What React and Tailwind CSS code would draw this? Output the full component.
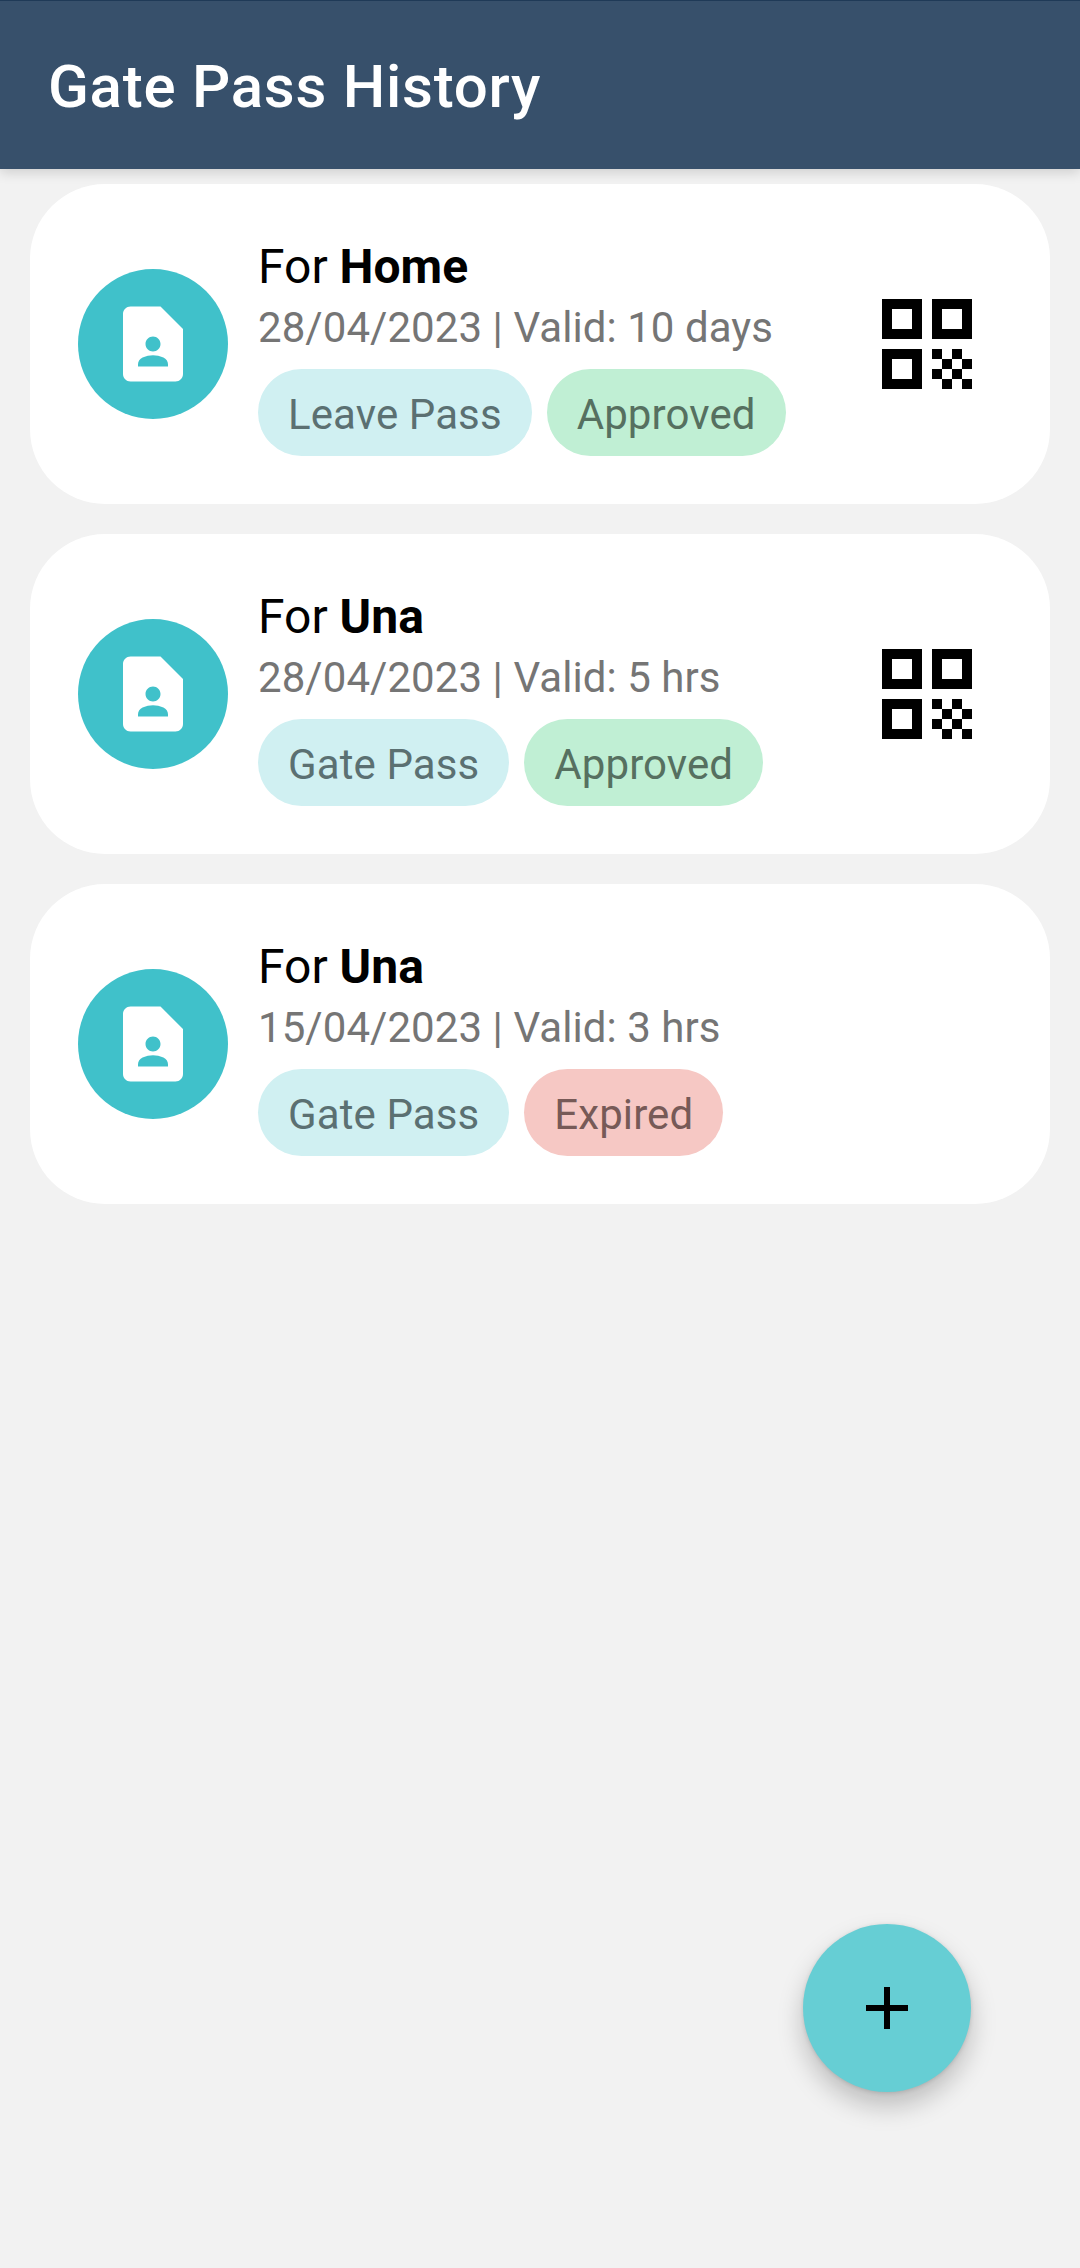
import React from "react";

const passes = [
  { to: "Home", date: "28/04/2023", valid: "10 days", type: "Leave Pass", status: "Approved" },
  { to: "Una", date: "28/04/2023", valid: "5 hrs", type: "Gate Pass", status: "Approved" },
  { to: "Una", date: "15/04/2023", valid: "3 hrs", type: "Gate Pass", status: "Expired" },
];

const statusStyles = {
  Approved: "bg-[#c0efd4] text-[#567060]",
  Expired: "bg-[#f6c8c4] text-[#775a57]",
};

function ContactPageIcon() {
  return (
    <svg viewBox="0 0 24 24" className="size-[90px] fill-white">
      <path d="M14 2H6c-1.1 0-2 .9-2 2v16c0 1.1.9 2 2 2h12c1.1 0 2-.9 2-2V8l-6-6zm-2 8c1.1 0 2 .9 2 2s-.9 2-2 2-2-.9-2-2 .9-2 2-2zm4 8H8v-.57c0-.81.48-1.53 1.22-1.85a6.95 6.95 0 0 1 5.56 0c.74.32 1.22 1.04 1.22 1.85V18z" />
    </svg>
  );
}

function QrIcon() {
  return (
    <svg viewBox="0 0 24 24" className="size-[120px] fill-black" shapeRendering="crispEdges">
      <path d="M3 11h8V3H3v8zm2-6h4v4H5V5zM3 21h8v-8H3v8zm2-6h4v4H5v-4zM13 3v8h8V3h-8zm6 6h-4V5h4v4zM13 13h2v2h-2zM17 13h2v2h-2zM15 15h2v2h-2zM19 15h2v2h-2zM13 17h2v2h-2zM17 17h2v2h-2zM15 19h2v2h-2zM19 19h2v2h-2z" />
    </svg>
  );
}

function Chip({ className, children }) {
  return (
    <span className={`flex h-[87px] items-center rounded-full px-[30px] pt-1 text-[42px] leading-none tracking-[0.1px] ${className}`}>
      {children}
    </span>
  );
}

function PassCard({ pass }) {
  return (
    <article className="flex h-[320px] items-center rounded-[75px] bg-white px-12">
      <div className="flex size-[150px] shrink-0 items-center justify-center rounded-full bg-[#40c1ca]">
        <ContactPageIcon />
      </div>
      <div className="ml-[30px] flex h-[224px] grow flex-col whitespace-nowrap">
        <h2 className="h-[68px] text-[48px] leading-[70px] font-normal text-black">
          For <b className="font-bold">{pass.to}</b>
        </h2>
        <p className="h-[69px] text-[42px] leading-[55px] tracking-[0.06px] text-[#757575]">
          {pass.date} | Valid: {pass.valid}
        </p>
        <div className="flex gap-[15px]">
          <Chip className="bg-[#d0f0f2] text-[#5b7072]">{pass.type}</Chip>
          <Chip className={statusStyles[pass.status]}>{pass.status}</Chip>
        </div>
      </div>
      {pass.status === "Approved" && (
        <button className="mr-[15px]" aria-label="Show QR code">
          <QrIcon />
        </button>
      )}
    </article>
  );
}

export default function App() {
  return (
    <div className="relative flex h-[2268px] w-[1080px] flex-col overflow-hidden bg-[#f2f2f2] font-['Roboto',sans-serif]">
      <header className="flex h-[169px] shrink-0 items-center border-t border-[#1f3a57] bg-[#37506b] pl-12 shadow-[0_3px_12px_rgba(0,0,0,0.16)]">
        <h1 className="pt-1 text-[60px] leading-[72px] font-medium tracking-[0.75px] text-white">Gate Pass History</h1>
      </header>
      <main className="relative flex flex-col gap-[30px] px-[30px] pt-[15px]">
        {passes.map((pass, i) => (
          <PassCard key={i} pass={pass} />
        ))}
      </main>
      <button
        aria-label="New pass"
        className="absolute right-[109px] bottom-[176px] flex size-[168px] items-center justify-center rounded-full bg-[#66ced4] shadow-[0_14px_26px_rgba(0,0,0,0.22),0_1px_4px_rgba(0,0,0,0.12)]"
      >
        <svg viewBox="0 0 24 24" className="size-[72px] fill-black">
          <path d="M19 13h-6v6h-2v-6H5v-2h6V5h2v6h6v2z" />
        </svg>
      </button>
    </div>
  );
}
